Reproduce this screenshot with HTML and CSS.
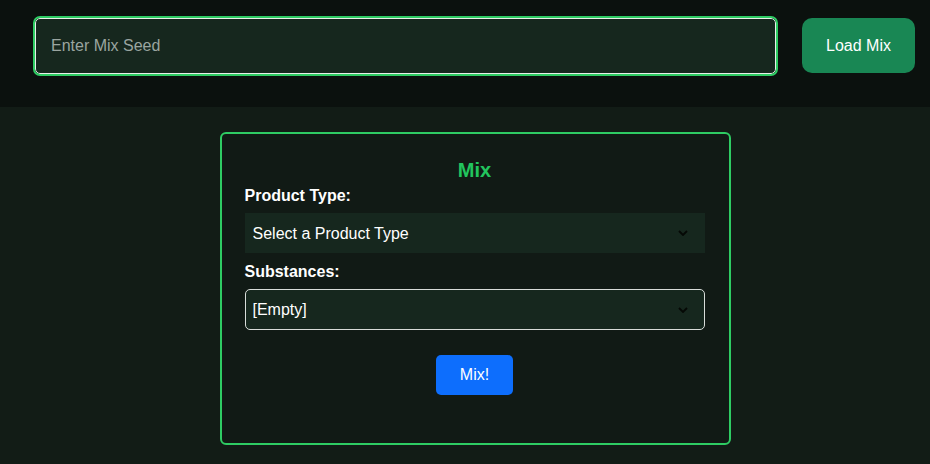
FILE: index.html
```html
<!DOCTYPE html>
<html lang="en">
<head>
<meta charset="utf-8">
<title>Mix</title>
<link rel="stylesheet" href="styles.css">
</head>
<body>
<header class="topbar">
  <input class="seed-input" type="text" placeholder="Enter Mix Seed">
  <button class="load-btn">Load Mix</button>
</header>
<main class="page">
  <section class="card">
    <h2 class="card-title">Mix</h2>
    <label class="field-label" for="ptype">Product Type:</label>
    <select id="ptype" class="field-select plain">
      <option>Select a Product Type</option>
    </select>
    <label class="field-label second" for="subs">Substances:</label>
    <select id="subs" class="field-select bordered">
      <option>[Empty]</option>
    </select>
    <div class="actions">
      <button class="mix-btn">Mix!</button>
    </div>
  </section>
</main>
</body>
</html>
```
FILE: styles.css
```css
* { box-sizing: border-box; }
html, body {
  margin: 0;
  padding: 0;
  background: #121c16;
  font-family: "Liberation Sans", Arial, sans-serif;
  color: #ffffff;
}
.topbar {
  display: flex;
  align-items: flex-start;
  gap: 26px;
  height: 107px;
  padding: 18px 15px 0 35px;
  background: #0b110e;
}
.seed-input {
  flex: 1;
  height: 56px;
  padding: 0 15px;
  background: #16271e;
  border: 1px solid #e8efe9;
  border-radius: 5px;
  outline: 2px solid #2ecc63;
  outline-offset: 0;
  color: #fff;
  font-family: inherit;
  font-size: 16px;
}
.seed-input::placeholder { color: #9aa5a0; }
.load-btn {
  width: 113px;
  height: 55px;
  background: #198754;
  border: none;
  border-radius: 10px;
  color: #fff;
  font-family: inherit;
  font-size: 16px;
}
.page {
  display: flex;
  justify-content: center;
  padding-top: 25px;
}
.card {
  width: 511px;
  margin-left: 20px;
  display: flex;
  flex-direction: column;
  padding: 25px 24px 48px 23px;
  background: #111a15;
  border: 2px solid #2ecc63;
  border-radius: 6px;
}
.card-title {
  margin: 0 0 5px;
  text-align: center;
  color: #22c55e;
  font-size: 20px;
  line-height: 23px;
  font-weight: bold;
}
.field-label {
  font-weight: bold;
  font-size: 16px;
  line-height: 18px;
  margin-bottom: 8px;
}
.field-label.second { margin-top: 10px; }
.field-select {
  -webkit-appearance: none;
  appearance: none;
  height: 40px;
  padding: 0 30px 0 7px;
  background-color: #16271e;
  background-image: url("data:image/svg+xml,%3Csvg xmlns='http://www.w3.org/2000/svg' width='10' height='6' viewBox='0 0 10 6'%3E%3Cpath d='M1 1l4 4 4-4' fill='none' stroke='%23050805' stroke-width='1.8'/%3E%3C/svg%3E");
  background-repeat: no-repeat;
  background-position: right 16px center;
  background-size: 10px 6px;
  color: #fff;
  font-family: inherit;
  font-size: 16px;
  border-radius: 5px;
}
.field-select.plain {
  border: 1px solid #16271e;
  border-radius: 0;
}
.field-select.bordered {
  height: 41px;
  border: 1px solid #d8dcd9;
}
.actions {
  display: flex;
  justify-content: center;
  margin-top: 25px;
}
.mix-btn {
  width: 77px;
  height: 40px;
  background: #0d6efd;
  border: none;
  border-radius: 5px;
  color: #fff;
  font-family: inherit;
  font-size: 16px;
}
```
